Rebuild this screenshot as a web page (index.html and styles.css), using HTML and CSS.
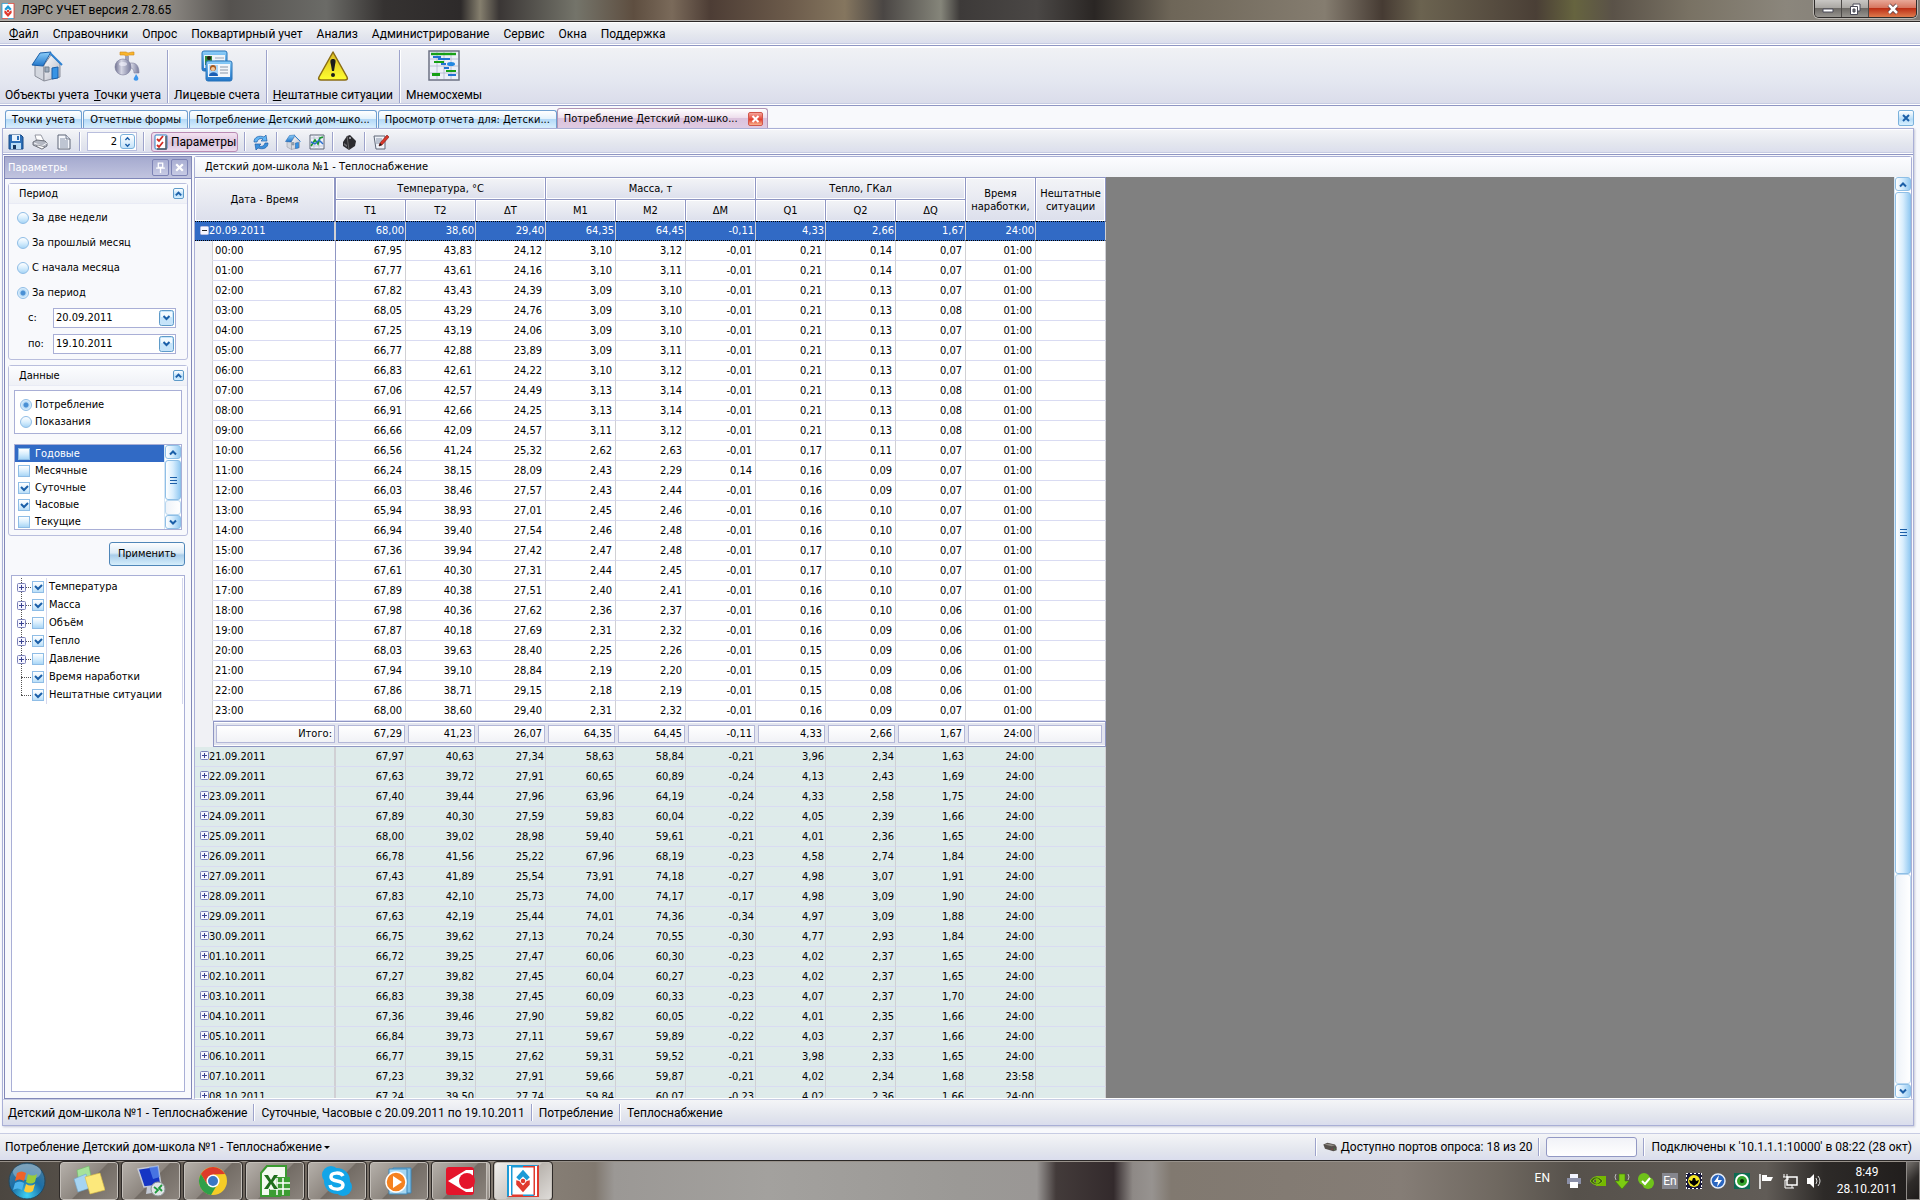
FILE: index.html
```html
<!DOCTYPE html>
<html lang="ru">
	<head>
		<meta charset="utf-8" />
		<title>ЛЭРС УЧЕТ версия 2.78.65</title>
		<link rel="stylesheet" href="styles.css">
	</head>
	<body>
		<svg class="defs" width="0" height="0">
			<defs>
				<linearGradient id="gBlue" x1="0" y1="0" x2="0" y2="1"><stop offset="0" stop-color="#8fd0fa"/><stop offset="1" stop-color="#1f74c9"/></linearGradient>
				<linearGradient id="gGrey" x1="0" y1="0" x2="1" y2="1"><stop offset="0" stop-color="#fdfdff"/><stop offset="1" stop-color="#b4b8c4"/></linearGradient>
				<linearGradient id="gMetal" x1="0" y1="0" x2="1" y2="0"><stop offset="0" stop-color="#6f7191"/><stop offset=".4" stop-color="#d5d6e4"/><stop offset="1" stop-color="#777a9b"/></linearGradient>
				<linearGradient id="gWarn" x1="0" y1="0" x2="0" y2="1"><stop offset="0" stop-color="#d9b824"/><stop offset="1" stop-color="#ffff2e"/></linearGradient>
				<radialGradient id="gOrb" cx=".5" cy=".9" r=".9"><stop offset="0" stop-color="#3fd3f5"/><stop offset=".5" stop-color="#1b6ea6"/><stop offset="1" stop-color="#4b7c9c"/></radialGradient>
			</defs>
			<symbol id="logo" viewBox="0 0 32 40">
				<path d="M1 1h30v38H1z" fill="#fff"/>
				<path d="M1 39V1h15M16 39h15" fill="none" stroke="#1c9ad6" stroke-width="2"/>
				<path d="M16 1h15v38M1 39h15" fill="none" stroke="#e03a2e" stroke-width="2"/>
				<path d="M16 5l9 10-4 4-5-5-5 5-4-4z" fill="#1c9ad6"/>
				<path d="M7 19l4 1 5 6 5-6 4-1v6l-9 10-9-10z" fill="#e03a2e"/>
				<circle cx="16" cy="20" r="3" fill="#e03a2e"/>
			</symbol>
			<symbol id="house" viewBox="0 0 32 32">
				<path d="M4 15l9-1v17l-9-5z" fill="#d3d7df" stroke="#8b8f9b"/>
				<path d="M13 15l7-10 9 9v13l-16 4z" fill="url(#gGrey)" stroke="#8b8f9b"/>
				<path d="M1 15L9 3l11-1-8 14z" fill="url(#gBlue)" stroke="#1b5fa8"/>
				<path d="M19 3l12 12" stroke="#2f82d2" stroke-width="2"/>
				<path d="M21 18l6-1v11l-6 1z" fill="#3793e4" stroke="#1b5fa8"/>
				<path d="M14 17h4v5h-4z" fill="#9dabbd" stroke="#72808f"/>
			</symbol>
			<symbol id="tap" viewBox="0 0 32 32">
				<path d="M8 2h6l2 1 4-1h2v3h-5l-2 1-3-1H8z" fill="#f9b52c" stroke="#cf861c" stroke-width=".6"/>
				<path d="M13 6h4v5h-4z" fill="#9fa1b8"/>
				<path d="M14 13h6c5 0 7 4 7 10h-5c0-3-1-5-4-5z" fill="url(#gMetal)" stroke="#7c7e9b" stroke-width=".6"/>
				<circle cx="11" cy="17" r="8" fill="url(#gMetal)" stroke="#7c7e9b" stroke-width=".6"/>
				<ellipse cx="11" cy="14" rx="4" ry="2" fill="#eeeefa" opacity=".7"/>
				<path d="M24 24c2 3 3 4 2 6-1 1-3 1-4 0-1-2 1-3 2-6z" fill="#3f97ec"/>
			</symbol>
			<symbol id="cards" viewBox="0 0 32 32">
				<rect x="1" y="1" width="25" height="20" rx="2" fill="url(#gBlue)" stroke="#2772b7"/>
				<path d="M3 5h21v13H3z" fill="#eef3f8"/>
				<path d="M4 6h7v9H4z" fill="#2f8a3e"/><circle cx="8" cy="8" r="2" fill="#2a1b10"/>
				<path d="M14 8h9M14 11h9" stroke="#9aa7b8"/>
				<rect x="5" y="11" width="26" height="20" rx="2" fill="url(#gBlue)" stroke="#2772b7"/>
				<path d="M7 14h22v13H7z" fill="#f4f6fa"/>
				<path d="M8 15h9v11H8z" fill="#a9d4f7"/>
				<circle cx="12" cy="18" r="3" fill="#a8571c"/><circle cx="12" cy="19" r="2" fill="#f5c89a"/><path d="M8 26c0-5 9-5 9 0z" fill="#1c5fb4"/>
				<path d="M19 17h8M19 20h8M19 23h8" stroke="#8a97a8"/>
			</symbol>
			<symbol id="warn" viewBox="0 0 32 32">
				<path d="M16 2L30 27c1 2 0 3-2 3H4c-2 0-3-1-2-3z" fill="url(#gWarn)" stroke="#8a6c14" stroke-width="1.5" stroke-linejoin="round"/>
				<path d="M16 9c3 0 3 2 2 6l-1 6h-2l-1-6c-1-4-1-6 2-6z" fill="#1c1c1c"/><circle cx="16" cy="25" r="2" fill="#1c1c1c"/>
			</symbol>
			<symbol id="gantt" viewBox="0 0 32 32">
				<path d="M1 1h30v29H1z" fill="#eceff8" stroke="#6c7183" stroke-width="1.5"/>
				<path d="M2 9h28M2 16h28M2 23h28M9 2v27M16 2v27M23 2v27" stroke="#b3b8cf" stroke-width=".8"/>
				<path d="M3 4h25" stroke="#16a016" stroke-width="2.4"/>
				<path d="M5 7h8M10 9h12M13 14h5M16 18h5M20 25h8" stroke="#2272d2" stroke-width="2"/>
				<path d="M6 12h10M18 21h10" stroke="#16a016" stroke-width="2"/>
				<path d="M4 23h8v3H4z" fill="#16a016"/><ellipse cx="23" cy="14" rx="4" ry="2" fill="#2287e2"/>
			</symbol>
			<symbol id="save" viewBox="0 0 16 16">
				<path d="M1 1h12l2 2v12H1z" fill="#2d6fb7" stroke="#194a86"/>
				<path d="M4 1h8v6H4z" fill="#e9f3fc"/><path d="M9 2h2v4H9z" fill="#2d6fb7"/>
				<path d="M3 9h10v6H3z" fill="#b9dcf6"/><path d="M5 11h3v4H5z" fill="#17365c"/>
			</symbol>
			<symbol id="print" viewBox="0 0 16 16">
				<path d="M3 1l6-0 3 6-7 1z" fill="#fff" stroke="#7d818d" stroke-width=".8"/>
				<path d="M1 8l4-2 8 1 2 2v3l-5 3-9-4z" fill="#b4b8c3" stroke="#555964" stroke-width=".8"/>
				<path d="M2 9l8 3 5-3" fill="none" stroke="#f3f4f8"/>
				<path d="M4 12l6 3 3-2-7-2z" fill="#fff" stroke="#555964" stroke-width=".6"/>
			</symbol>
			<symbol id="doc" viewBox="0 0 16 16">
				<path d="M2 1h8l4 4v10H2z" fill="#f5f7fc" stroke="#5e6676"/>
				<path d="M4 5h5M4 7h8M4 9h8M4 11h8M4 13h8" stroke="#8793a8"/><path d="M10 1v4h4" fill="#d6dce8" stroke="#5e6676" stroke-width=".8"/>
			</symbol>
			<symbol id="checks" viewBox="0 0 16 16">
				<rect x="2" y="1" width="12" height="14" rx="1" fill="#fff" stroke="#2f80c3"/>
				<path d="M13 2v13H4" fill="none" stroke="#4b565f" stroke-width="1.5"/>
				<path d="M4 5l2 2 4-5M4 11l2 2 4-5" fill="none" stroke="#d22b22" stroke-width="1.8"/>
			</symbol>
			<symbol id="refresh" viewBox="0 0 16 16">
				<path d="M1 8C1 3 6 1 11 3l2-2 1 6H8l2-2C7 4 5 5 4 8z" fill="#62b5f3" stroke="#1c5da8" stroke-width=".7"/>
				<path d="M15 9c0 5-5 7-10 5l-2 2-1-6h6l-2 2c3 1 5 0 6-3z" fill="#3b8fdb" stroke="#1c5da8" stroke-width=".7"/>
			</symbol>
			<symbol id="chart" viewBox="0 0 16 16">
				<path d="M1 1h14v14H1z" fill="#eef2f9" stroke="#5e6676"/><path d="M1 4h14M1 8h14M1 12h14M5 1v14M10 1v14" stroke="#b5bccd" stroke-width=".7"/>
				<path d="M2 12l4-6 3 4 2-6 3-1" fill="none" stroke="#18962d" stroke-width="1.6"/><path d="M2 8l4 2 4-4 4 4" fill="none" stroke="#2b6fd0" stroke-width="1.4"/>
			</symbol>
			<symbol id="box" viewBox="0 0 16 16">
				<path d="M2 8l4-6 3-1 6 6-1 5-6 4-6-4z" fill="#2b2b2f"/><path d="M6 2l1 7 1 7" stroke="#777" stroke-width=".8" fill="none"/><path d="M3 9l3 2v2l-3-2z" fill="#6c6c72"/><circle cx="9" cy="4" r="1" fill="#b7b7bd"/>
			</symbol>
			<symbol id="edit" viewBox="0 0 16 16">
				<path d="M1 2h11v13H3z" fill="#eef2f9" stroke="#5e6676"/><path d="M3 5h6M3 7h6M3 9h4" stroke="#8793a8"/>
				<path d="M6 12l1-3 7-8 2 2-7 8z" fill="#d9372a" stroke="#7b1712" stroke-width=".6"/><path d="M6 12l1-3 2 2z" fill="#1b1b1b"/>
			</symbol>
			<symbol id="modem" viewBox="0 0 16 12">
				<path d="M0 3l5-2 9 2 2 3v4l-4 1L2 8z" fill="#55504c"/><path d="M1 3l5-1 8 2-4 1z" fill="#8f8a84"/><path d="M10 8h1v1h-1z" fill="#e33"/><path d="M13 8h1v1h-1z" fill="#3c3"/>
			</symbol>
			<symbol id="x" viewBox="0 0 10 10"><path d="M2 2l6 6M8 2L2 8" stroke="currentColor" stroke-width="2" fill="none"/></symbol>
			<symbol id="pin" viewBox="0 0 10 10"><path d="M3 1h4v4H3zM1 5.5h8M5 6v4" stroke="currentColor" stroke-width="1.2" fill="none"/></symbol>
			<symbol id="up" viewBox="0 0 10 10"><path d="M2 7l3-3 3 3" stroke="currentColor" stroke-width="2" fill="none"/></symbol>
			<symbol id="down" viewBox="0 0 10 10"><path d="M2 3l3 3 3-3" stroke="currentColor" stroke-width="2" fill="none"/></symbol>
			<symbol id="plus" viewBox="0 0 9 9"><rect x=".5" y=".5" width="8" height="8" rx="1" fill="#f6f6ff" stroke="#7c82b8"/><path d="M2 4.500h5M4.500 2v5" stroke="#3a4390"/></symbol>
			<symbol id="minus" viewBox="0 0 9 9"><rect x=".5" y=".5" width="8" height="8" rx="1" fill="#f6f6ff" stroke="#b9bde0"/><path d="M2 4.500h5" stroke="#222"/></symbol>
		</svg>

		<header class="titlebar">
			<svg class="titleIcon"><use href="#logo"/></svg>
			<h1>ЛЭРС УЧЕТ версия 2.78.65</h1>
			<div class="winButtons">
				<button aria-label="Свернуть"><svg viewBox="0 0 12 12"><path d="M1 6h10v3H1z" fill="#fff" stroke="#4a4a58"/></svg></button>
				<button aria-label="Восстановить"><svg viewBox="0 0 12 12"><path d="M4 1h7v7H4z" fill="#fff" stroke="#4a4a58"/><path d="M1.500 3.500h7v8h-7z" fill="#fff" stroke="#4a4a58"/><path d="M4 6h2v3H4z" fill="#777" stroke="#4a4a58"/></svg></button>
				<button class="winClose" aria-label="Закрыть"><svg viewBox="0 0 12 12"><path d="M2 2l8 8M10 2l-8 8" stroke="#5b3c40" stroke-width="4"/><path d="M2 2l8 8M10 2l-8 8" stroke="#fff" stroke-width="2.500"/></svg></button>
			</div>
		</header>

		<nav class="menu">
			<a href="#"><u>Ф</u>айл</a>
			<a href="#">Справочники</a>
			<a href="#">Опрос</a>
			<a href="#">Поквартирный учет</a>
			<a href="#">Анализ</a>
			<a href="#">Администрирование</a>
			<a href="#">Сервис</a>
			<a href="#">Окна</a>
			<a href="#">Поддержка</a>
		</nav>

		<div class="toolbar">
			<button><svg><use href="#house"/></svg>Объекты учета</button>
			<button><svg><use href="#tap"/></svg><span><u>Т</u>очки учета</span></button>
			<i class="sep"></i>
			<button><svg><use href="#cards"/></svg>Лицевые счета</button>
			<i class="sep"></i>
			<button><svg><use href="#warn"/></svg><span><u>Н</u>ештатные ситуации</span></button>
			<i class="sep"></i>
			<button><svg><use href="#gantt"/></svg>Мнемосхемы</button>
		</div>

		<div class="tabs">
			<button class="tab">Точки учета</button>
			<button class="tab">Отчетные формы</button>
			<button class="tab">Потребление Детский дом-шко...</button>
			<button class="tab">Просмотр отчета для: Детски...</button>
			<div class="tab tabActive">
				<span>Потребление Детский дом-шко...</span>
				<button class="tabClose" aria-label="Закрыть вкладку"><svg><use href="#x"/></svg></button>
			</div>
			<button class="smallButton tabsClose" aria-label="Закрыть"><svg><use href="#x"/></svg></button>
		</div>

		<main class="document">
			<div class="tools">
				<button aria-label="Сохранить"><svg><use href="#save"/></svg></button>
				<button aria-label="Печать"><svg><use href="#print"/></svg></button>
				<button aria-label="Документ"><svg><use href="#doc"/></svg></button>
				<i class="sep"></i>
				<div class="spin">
					<input type="text" value="2" aria-label="Точность" />
					<span class="spinButtons"><svg><use href="#up"/></svg><svg><use href="#down"/></svg></span>
				</div>
				<i class="sep"></i>
				<button class="pressed"><svg><use href="#checks"/></svg>Параметры</button>
				<i class="sep"></i>
				<button aria-label="Обновить"><svg><use href="#refresh"/></svg></button>
				<i class="sep"></i>
				<button aria-label="Объект"><svg><use href="#house"/></svg></button>
				<button aria-label="График"><svg><use href="#chart"/></svg></button>
				<i class="sep"></i>
				<button aria-label="Прибор"><svg><use href="#box"/></svg></button>
				<i class="sep"></i>
				<button aria-label="Правка"><svg><use href="#edit"/></svg></button>
			</div>

			<div class="work">
				<aside class="panel">
					<div class="panelHead">
						<h2>Параметры</h2>
						<button aria-label="Закрепить"><svg><use href="#pin"/></svg></button>
						<button aria-label="Закрыть панель"><svg><use href="#x"/></svg></button>
					</div>
					<section class="group">
						<div class="groupHead"><h3>Период</h3><button class="smallButton" aria-label="Свернуть период"><svg><use href="#up"/></svg></button></div>
						<div class="period">
							<label><input type="radio" name="period" />За две недели</label>
							<label><input type="radio" name="period" />За прошлый месяц</label>
							<label><input type="radio" name="period" />С начала месяца</label>
							<label><input type="radio" name="period" checked />За период</label>
							<div class="dateRow"><label for="dateFrom">с:</label><select id="dateFrom"><option>20.09.2011</option></select></div>
							<div class="dateRow"><label for="dateTo">по:</label><select id="dateTo"><option>19.10.2011</option></select></div>
						</div>
					</section>
					<section class="group">
						<div class="groupHead"><h3>Данные</h3><button class="smallButton" aria-label="Свернуть данные"><svg><use href="#up"/></svg></button></div>
						<div class="kind">
							<label><input type="radio" name="kind" checked />Потребление</label>
							<label><input type="radio" name="kind" />Показания</label>
						</div>
						<div class="list">
							<div class="listItems">
								<label class="selected"><input type="checkbox" />Годовые</label>
								<label><input type="checkbox" />Месячные</label>
								<label><input type="checkbox" checked />Суточные</label>
								<label><input type="checkbox" checked />Часовые</label>
								<label><input type="checkbox" />Текущие</label>
							</div>
							<div class="scroll"><button aria-label="Вверх"><svg><use href="#up"/></svg></button><i class="thumb thumbList"></i><i class="track"></i><button aria-label="Вниз"><svg><use href="#down"/></svg></button></div>
						</div>
					</section>
					<button class="apply">Применить</button>
					<div class="tree">
						<label><svg><use href="#plus"/></svg><input type="checkbox" checked /><span>Температура</span></label>
						<label><svg><use href="#plus"/></svg><input type="checkbox" checked /><span>Масса</span></label>
						<label><svg><use href="#plus"/></svg><input type="checkbox" /><span>Объём</span></label>
						<label><svg><use href="#plus"/></svg><input type="checkbox" checked /><span>Тепло</span></label>
						<label><svg><use href="#plus"/></svg><input type="checkbox" /><span>Давление</span></label>
						<label class="leaf"><svg></svg><input type="checkbox" checked /><span>Время наработки</span></label>
						<label class="leaf last"><svg></svg><input type="checkbox" checked /><span>Нештатные ситуации</span></label>
					</div>
				</aside>

				<section class="report">
					<h2>Детский дом-школа №1 - Теплоснабжение</h2>
					<div class="gridArea">
						<div class="gridView">
							<table>
								<colgroup><col class="colGutter"><col class="colDate"><col span="11"></colgroup>
								<thead>
									<tr>
										<th colspan="2" rowspan="2" class="dateHead">Дата - Время</th>
										<th colspan="3">Температура, °С</th>
										<th colspan="3">Масса, т</th>
										<th colspan="3">Тепло, ГКал</th>
										<th rowspan="2">Время наработки,</th>
										<th rowspan="2">Нештатные ситуации</th>
									</tr>
									<tr><th>T1</th><th>T2</th><th>ΔT</th><th>M1</th><th>M2</th><th>ΔM</th><th>Q1</th><th>Q2</th><th>ΔQ</th></tr>
								</thead>
								<tbody id="rows"></tbody>
							</table>
						</div>
						<div class="scroll"><button aria-label="Вверх"><svg><use href="#up"/></svg></button><i class="thumb thumbGrid"></i><i class="track"></i><button aria-label="Вниз"><svg><use href="#down"/></svg></button></div>
					</div>
				</section>
			</div>

			<div class="status">
				<span>Детский дом-школа №1 - Теплоснабжение</span><i class="sep"></i>
				<span>Суточные, Часовые с 20.09.2011 по 19.10.2011</span><i class="sep"></i>
				<span>Потребление</span><i class="sep"></i>
				<span>Теплоснабжение</span>
			</div>
		</main>

		<footer class="appStatus">
			<button>Потребление Детский дом-школа №1 - Теплоснабжение<i class="caret"></i></button>
			<i class="sep pushRight"></i>
			<svg class="modem"><use href="#modem"/></svg>
			<span>Доступно портов опроса: 18 из 20</span>
			<i class="sep"></i>
			<div class="progress"></div>
			<i class="sep"></i>
			<span>Подключены к '10.1.1.1:10000' в 08:22 (28 окт)</span>
		</footer>

		<div class="taskbar">
			<button class="start" aria-label="Пуск">
				<svg viewBox="0 0 38 38"><circle cx="19" cy="19" r="18" fill="url(#gOrb)" stroke="#23485f"/><ellipse cx="19" cy="10" rx="14" ry="8" fill="#fff" opacity=".3"/>
				<path d="M9 11c3-2 6-2 9 0l-2 8c-3-2-6-2-9 0z" fill="#f0622a"/><path d="M20 12c3 2 6 2 9 0l-2 8c-3 2-6 2-9 0z" fill="#9acb3c"/><path d="M7 21c3-2 6-2 9 0l-2 7c-3-2-6-2-9 0z" fill="#4cb4ee"/><path d="M18 22c3 2 6 2 9 0l-2 7c-3 2-6 2-9 0z" fill="#fccb3a"/></svg>
			</button>
			<button class="app" aria-label="Заметки"><svg viewBox="0 0 32 32"><path d="M4 5l12-4 3 16-13 3z" fill="#a6e29a" stroke="#6fb767" stroke-width=".6"/><path d="M1 14l12-5 4 14-12 4z" fill="#a6d4f2" stroke="#6ea6cf" stroke-width=".6"/><path d="M12 12l15-4 5 17-15 4z" fill="#fce87b" stroke="#d8b943" stroke-width=".6"/></svg></button>
			<button class="app" aria-label="Удаленный рабочий стол"><svg viewBox="0 0 32 32"><path d="M3 4l20-3 3 19-17 2z" fill="#1535c4" stroke="#c4cad6" stroke-width="1.500"/><path d="M14 2l9-1 2 11-7 2z" fill="#5c8ff0" opacity=".7"/><path d="M12 22l8-1 3 6-12 2z" fill="#c4cad6"/><circle cx="23" cy="24" r="7" fill="#dfe4e6" stroke="#8b9294"/><path d="M19 22l4 3-3 3M27 20l-3 3 3 3" fill="none" stroke="#1f9a3c" stroke-width="1.800"/></svg></button>
			<button class="app" aria-label="Браузер"><svg viewBox="0 0 32 32"><circle cx="16" cy="16" r="14" fill="#f5cc27"/><path d="M3.900 9A14 14 0 0 1 28.100 9L16 9.500 10 19z" fill="#dd3b2a"/><path d="M3.900 9A14 14 0 0 0 14 30l6-10-10-1z" fill="#2fa04a"/><circle cx="16" cy="16" r="6.500" fill="#fff"/><circle cx="16" cy="16" r="5" fill="#3b77c4"/></svg></button>
			<button class="app" aria-label="Таблицы"><svg viewBox="0 0 32 32"><path d="M2 8l6-7h19v25l-6 5H2z" fill="#f4faf0" stroke="#3a9a30" stroke-width="2"/><path d="M17 12h14v19H10v-7h7z" fill="#3c9d33"/><path d="M18 18h13M11 24h20M18 13v17M24 13v17" stroke="#fff" stroke-width="1.500"/><path d="M5 10h4l3 5 3-5h4l-5 7 5 7h-4l-3-5-3 5H5l5-7z" fill="#1f6e1c"/></svg></button>
			<button class="app" aria-label="Скайп"><svg viewBox="0 0 32 32"><circle cx="10" cy="10" r="9" fill="#12a5e8"/><circle cx="22" cy="22" r="9" fill="#12a5e8"/><circle cx="16" cy="16" r="13" fill="#12a5e8"/><path d="M22 11c-2-4-12-4-12 1 0 6 12 2 12 8 0 6-12 5-13 0" fill="none" stroke="#fff" stroke-width="3.500"/></svg></button>
			<button class="app" aria-label="Плеер"><svg viewBox="0 0 32 32"><path d="M10 3h18v25H10z" fill="#7ebfe6" stroke="#3e87b8"/><path d="M6 4h18v25H6z" fill="#a6d7f2" stroke="#3e87b8"/><circle cx="13" cy="17" r="10" fill="#f58220" stroke="#fff" stroke-width="1.500"/><path d="M10 11l9 6-9 6z" fill="#fff"/></svg></button>
			<button class="app stacked" aria-label="Камера"><svg viewBox="0 0 32 32"><rect x="2" y="2" width="28" height="28" rx="3" fill="#e4152b"/><path d="M4 16L22 5h7v22h-7z" fill="#fff"/><circle cx="23" cy="16" r="8" fill="#e4152b"/></svg></button>
			<button class="app appActive" aria-label="ЛЭРС УЧЕТ"><svg class="appLogo"><use href="#logo"/></svg></button>
			<div class="tray">
				<span class="lang">EN</span>
				<svg viewBox="0 0 16 16"><path d="M4 1h8v5H4z" fill="#f2f4ff"/><path d="M1 5h14v6H1z" fill="#8b90a8"/><path d="M4 9h8v6H4z" fill="#fff"/></svg>
				<svg viewBox="0 0 16 16"><path d="M6 3h10v10H6z" fill="#76b900"/><path d="M0 8c4-6 9-5 13 0-4 5-9 5-13 0zm3 0c3 3 5 3 7 0-2-3-4-3-7 0z" fill="#3f6d08" stroke="#8fd11c" stroke-width=".8"/></svg>
				<svg viewBox="0 0 16 16"><path d="M5 1h6v7h4l-7 8-7-8h4z" fill="#7ccc12" stroke="#3f7d06" stroke-width=".6"/><path d="M2 1Q0 4 2 7M14 1q2 3 0 6" stroke="#bbb" fill="none"/></svg>
				<svg viewBox="0 0 16 16"><circle cx="6" cy="6" r="6" fill="#6fc21a"/><circle cx="10" cy="10" r="6" fill="#6fc21a"/><path d="M4 8l3 3 5-6" fill="none" stroke="#fff" stroke-width="2"/></svg>
				<span class="trayEn">En</span>
				<svg viewBox="0 0 16 16"><path d="M0 0h16v16H0z" fill="#16163a" stroke="#fff" stroke-width="2" stroke-dasharray="2 2"/><circle cx="8" cy="8" r="6" fill="#f7ea25"/><path d="M3 7l3 1 1-3h2l1 3 3-1-1 3-4 3-4-3z" fill="#000"/></svg>
				<svg viewBox="0 0 16 16"><circle cx="8" cy="8" r="7" fill="#2a66c0" stroke="#e6eefa" stroke-width="1.500"/><path d="M9 2L4 9h4l-1 5 5-7H8z" fill="#fff"/></svg>
				<svg viewBox="0 0 16 16"><path d="M0 0h16v16H0z" fill="#0d6b52"/><circle cx="8" cy="8" r="7" fill="#fff"/><circle cx="8" cy="8" r="5" fill="#36a42c"/><circle cx="8" cy="8" r="2" fill="#082b08"/></svg>
				<svg viewBox="0 0 16 16"><path d="M2 1v15" stroke="#fff" stroke-width="1.500"/><path d="M4 2h5v6H4zM9 4h6l-2 4H9z" fill="#fff"/></svg>
				<svg viewBox="0 0 16 16"><path d="M5 4h10v8H5z" fill="none" stroke="#fff" stroke-width="1.500"/><path d="M2 1v3M5 1v3M1 4h5v3H3v8h9M10 12v3" fill="none" stroke="#fff"/></svg>
				<svg viewBox="0 0 16 16"><path d="M1 5h3l4-4v14l-4-4H1z" fill="#fff"/><path d="M10 5q2 3 0 6M12 3q4 5 0 10" fill="none" stroke="#ddd"/></svg>
				<time class="clock"><span>8:49</span><span>28.10.2011</span></time>
				<button class="showDesktop" aria-label="Свернуть все окна"></button>
			</div>
		</div>
		<script src="script.js"></script>
	</body>
</html>
```

FILE: styles.css
```css
* {
	box-sizing: border-box;
}
body {
	margin: 0;
	height: 100vh;
	display: flex;
	flex-direction: column;
	overflow: hidden;
	background: #f8f9fc;
	color: #000;
	font: 11px/14px "DejaVu Sans Condensed", "DejaVu Sans", sans-serif;
}
h1, h2, h3 {
	margin: 0;
	font-size: inherit;
	font-weight: normal;
}
button {
	font: inherit;
	color: inherit;
	margin: 0;
	padding: 0;
	border: 0;
	background: none;
}
svg {
	display: block;
	flex: none;
}
.defs {
	position: absolute;
}
a {
	color: inherit;
	text-decoration: none;
}
.sep {
	flex: none;
	width: 2px;
	align-self: stretch;
	border-left: 1px solid #9da3cb;
	border-right: 1px solid #fff;
}

/* window title */
.titlebar {
	flex: none;
	height: 22px;
	display: flex;
	align-items: flex-start;
	gap: 5px;
	border-bottom: 1px solid #2b2727;
	box-shadow: inset 0 -1px #b3afab;
	font: 12px/21px Roboto, sans-serif;
	background: linear-gradient(90deg, #a09c96 0, #99958f 8%, #55524f 12%, #6b6b67 17%, #353231 20%, #2d2a2a 24%, #857f6e 25%, #3a3635 26%, #74746a 30%, #5e4e40 33%, #7a6a5a 35%, #4d3d35 37%, #6b5a4a 41%, #85765f 44%, #4a4644 46%, #85857a 49%, #3d3a39 50%, #4a4745 54%, #2a2624 57%, #6e6658 61%, #857d70 69%, #463b33 72%, #6b6350 74%, #4a3f36 80%, #66643f 82%, #5a5248 84%, #797264 88%, #8b867c 93%, #7f7b76 100%);
}
.titleIcon {
	width: 16px;
	height: 16px;
	margin-top: 3px;
}
.titlebar h1 {
	flex: 1;
}
.winButtons {
	display: flex;
	height: 18px;
	margin-right: 3px;
	border: 1px solid #2e2b2a;
	border-top: 0;
	border-radius: 0 0 5px 5px;
	overflow: hidden;
	box-shadow: 0 0 0 1px #bbb7b2;
}
.winButtons button {
	width: 27px;
	display: flex;
	justify-content: center;
	align-items: center;
	border-right: 1px solid #4d4a48;
	background: linear-gradient(#c9c7c4, #a7a4a0 50%, #6d6a66 50%, #97948f);
}
.winButtons svg {
	width: 12px;
	height: 12px;
}
.winButtons .winClose {
	width: 47px;
	border-right: 0;
	background: linear-gradient(#e8a898, #d5705a 50%, #bd2f16 50%, #de7a4c);
}

/* main menu and big buttons */
.menu, .toolbar, .status, .appStatus {
	font: 12px/16px Roboto, sans-serif;
}
.menu {
	flex: none;
	height: 24px;
	display: flex;
	align-items: center;
	gap: 14px;
	padding: 0 9px;
	border-bottom: 1px solid #8f96c3;
	background: linear-gradient(#f4f5f7, #e3e6ee 60%, #dadded);
	box-shadow: inset 0 1px #fff, inset 0 -1px #fff, inset 0 -2px #c7cce3;
}
.toolbar {
	flex: none;
	height: 60px;
	display: flex;
	padding: 4px 3px 2px;
	border-bottom: 1px solid #8f96c3;
	background: linear-gradient(#f1f2f5, #e5e8f1 55%, #dadcea);
	box-shadow: inset 0 2px #fff, inset 0 -1px #fff, inset 0 -2px #c7cce3;
}
.toolbar button {
	display: flex;
	flex-direction: column;
	align-items: center;
	justify-content: space-between;
	padding: 0 3px 0 2px;
}
.toolbar svg {
	width: 32px;
	height: 32px;
}
.toolbar .sep {
	margin: 0 3px;
}

/* document tabs */
.tabs {
	flex: none;
	height: 22px;
	display: flex;
	align-items: flex-end;
	gap: 1px;
	padding: 0 6px 0 5px;
	background: #f8f9fc;
}
.tab {
	height: 18px;
	padding: 0 6px;
	border: 1px solid #6f9fd0;
	border-bottom: 0;
	border-radius: 3px 3px 0 0;
	background: linear-gradient(#fff, #e4f2fc 45%, #b4d9f7 50%, #d9effd);
	white-space: nowrap;
}
.tabActive {
	height: 20px;
	display: flex;
	align-items: center;
	gap: 10px;
	margin-left: -1px;
	padding-right: 4px;
	border-color: #b295b5;
	background: linear-gradient(#fff, #eedfed 45%, #dbc2dc 50%, #dfcbe2);
}
.tabClose {
	width: 15px;
	height: 14px;
	padding: 1px;
	border: 1px solid #d2564b;
	border-radius: 2px;
	color: #fff;
	background: linear-gradient(#f5a49a, #e2402f 55%, #f9b48f);
}
.tabClose svg {
	width: 11px;
	height: 10px;
}
.smallButton {
	flex: none;
	width: 16px;
	height: 16px;
	padding: 2px;
	border: 1px solid #7bb2dc;
	border-radius: 2px;
	color: #1b5fa8;
	background: linear-gradient(#fff, #b5dcf8 60%, #d8f0ff);
}
.smallButton svg {
	width: 10px;
	height: 10px;
}
.tabsClose {
	margin-left: auto;
	margin-bottom: 2px;
	align-self: flex-end;
}

/* document frame */
.document {
	flex: 1;
	min-height: 0;
	display: flex;
	flex-direction: column;
	margin: 0 6px 7px 2px;
	border: 1px solid #a9afd6;
	box-shadow: 1px 1px 2px #c5c8d8;
}
.tools {
	flex: none;
	height: 26px;
	display: flex;
	align-items: center;
	gap: 6px;
	padding: 0 4px;
	border-bottom: 1px solid #8f96c3;
	background: linear-gradient(#f4f5f8, #e3e6ee 60%, #dadded);
	box-shadow: inset 0 1px #fff, inset 0 -1px #fff, inset 0 -2px #c7cce3;
}
.tools svg {
	width: 16px;
	height: 16px;
}
.tools > button {
	display: flex;
	align-items: center;
	gap: 2px;
	padding: 0 1px;
}
.tools .sep {
	margin: 3px 0;
}
.tools .pressed {
	height: 20px;
	border: 1px solid #b98bb3;
	border-radius: 3px;
	background: linear-gradient(#f3e3f1, #dcc4dd 55%, #ecdcee);
	font: 12px/16px Roboto, sans-serif;
}
.spin {
	width: 50px;
	height: 19px;
	display: flex;
	border: 1px solid #b9bedd;
	background: #fff;
}
.spin input {
	width: 31px;
	border: 0;
	padding: 0 2px;
	background: none;
	font: inherit;
	text-align: right;
}
.spinButtons {
	width: 15px;
	margin: 1px;
	border: 1px solid #7bb2dc;
	border-radius: 3px;
	color: #1b5fa8;
	background: linear-gradient(#fff, #c4e3fa);
}
.spinButtons svg {
	width: 13px;
	height: 7px;
}
.work {
	flex: 1;
	min-height: 0;
	display: flex;
	gap: 2px;
	padding: 1px 1px 0;
}

/* left panel */
.panel {
	flex: none;
	width: 188px;
	display: flex;
	flex-direction: column;
	border: 1px solid #8288b8;
	background: #f8f9fc;
}
.panelHead {
	flex: none;
	height: 22px;
	display: flex;
	align-items: center;
	gap: 2px;
	padding: 0 3px;
	border-bottom: 1px solid #7f86b8;
	color: #fff;
	background: linear-gradient(#a5aacf, #c1c4df);
}
.panelHead h2 {
	flex: 1;
}
.panelHead button {
	width: 17px;
	height: 17px;
	padding: 2px;
	border: 1px solid #7d83b5;
	border-radius: 2px;
	background: linear-gradient(#a9aed2, #c7cae4);
}
.panelHead svg {
	width: 11px;
	height: 11px;
}
.group {
	flex: none;
	margin: 4px 3px 1px;
	padding: 0 5px 5px;
	border: 1px solid #b9bedd;
	border-radius: 3px;
}
.groupHead {
	height: 20px;
	display: flex;
	align-items: center;
	justify-content: space-between;
	margin: 0 -5px;
	padding: 0 3px 0 10px;
	border-bottom: 1px solid #e9ebf5;
	background: linear-gradient(#fcfdff, #eff1f6);
}
.groupHead .smallButton {
	width: 11px;
	height: 11px;
	padding: 0;
	border-color: #5f9bc9;
}
.groupHead svg {
	width: 9px;
	height: 9px;
}
input[type=radio], input[type=checkbox] {
	appearance: none;
	flex: none;
	width: 12px;
	height: 12px;
	margin: 0;
	border: 1px solid #8fbde6;
	background: linear-gradient(#fff, #d8eefd 50%, #a9d6f6);
}
input[type=radio] {
	border-radius: 50%;
}
input[type=radio]:checked {
	background: radial-gradient(circle at 50% 50%, #4a90d4 0, #4a90d4 2px, #b5d9f6 3px, #e2f3fe 5px);
}
input[type=checkbox]:checked {
	background: url("data:image/svg+xml,%3Csvg xmlns='http://www.w3.org/2000/svg' viewBox='0 0 10 10'%3E%3Cpath d='M2 4l3 3 4-4' fill='none' stroke='%231b5fa8' stroke-width='2'/%3E%3C/svg%3E"), linear-gradient(#fff, #e2f3fe 50%, #b9def8);
}
.period label, .kind label, .listItems label {
	display: flex;
	align-items: center;
	gap: 3px;
}
.period {
	padding: 1px 6px 0 3px;
}
.period > label {
	height: 25px;
}
.dateRow {
	display: flex;
	align-items: center;
	padding-left: 11px;
	height: 20px;
	margin-top: 3px;
}
.dateRow + .dateRow {
	margin-top: 6px;
}
.dateRow label {
	width: 28px;
}
.dateRow select {
	appearance: none;
	width: 123px;
	flex: none;
	height: 20px;
	padding: 0 2px;
	border: 1px solid #a9afd6;
	border-radius: 0;
	color: #000;
	font: inherit;
	background: url("data:image/svg+xml,%3Csvg xmlns='http://www.w3.org/2000/svg' viewBox='0 0 15 16'%3E%3Crect x='.5' y='.5' width='14' height='15' rx='2' fill='%23c6e4fa' stroke='%235f9bc9'/%3E%3Cpath d='M2 2h11v5H2z' fill='%23f2faff'/%3E%3Cpath d='M4.500 6l3 3 3-3' fill='none' stroke='%231b5fa8' stroke-width='2'/%3E%3C/svg%3E") right 1px center / 15px 16px no-repeat #fff;
}
.kind {
	margin-top: 4px;
	padding: 5px;
	height: 44px;
	border: 1px solid #a9afd6;
	background: #fff;
}
.kind label {
	height: 17px;
}
.list {
	height: 86px;
	display: flex;
	margin: 10px 0 0;
	border: 1px solid #a9afd6;
	background: #fff;
}
.listItems {
	flex: 1;
	overflow: hidden;
}
.listItems label {
	gap: 5px;
	height: 17px;
	padding-left: 3px;
}
.listItems .selected {
	color: #fff;
	background: #316ac5;
}
.apply {
	flex: none;
	align-self: flex-end;
	width: 76px;
	height: 24px;
	margin: 5px 6px 9px 0;
	border: 1px solid #4f86b8;
	border-radius: 3px;
	background: linear-gradient(#fdfdfe, #dcebf6 45%, #a9cdea 55%, #d6eefb);
}
.tree {
	flex: 1;
	min-height: 0;
	margin: 0 6px 6px 6px;
	padding: 2px 1px 2px 5px;
	border: 1px solid #a9afd6;
	background: #fff;
}
.tree label {
	height: 18px;
	display: flex;
	align-items: center;
	background: repeating-linear-gradient(#555 0, #555 1px, transparent 1px, transparent 2px) 4px 0 / 1px 18px no-repeat;
}
.tree label.last {
	background-size: 1px 9px;
}
.tree svg {
	width: 9px;
	height: 9px;
}
.tree .leaf svg {
	visibility: hidden;
}
.tree label::before {
	content: "";
	order: 1;
	width: 5px;
	border-top: 1px dotted #555;
	margin-right: 1px;
}
.tree .leaf::before {
	width: 10px;
	margin-left: -5px;
}
.tree input {
	order: 2;
}
.tree span {
	order: 3;
	flex: 1;
	margin-left: 2px;
	padding-left: 2px;
	line-height: 18px;
	border-left: 1px solid #d5d8ee;
	border-right: 1px solid #d5d8ee;
}

/* report grid */
.report {
	flex: 1;
	min-width: 0;
	display: flex;
	flex-direction: column;
	border: 1px solid #a9afd6;
	border-bottom-color: #fff;
	border-radius: 3px 3px 0 0;
}
.report h2 {
	flex: none;
	height: 20px;
	padding-left: 10px;
	line-height: 20px;
	background: linear-gradient(#fcfdff, #eff1f5);
}
.gridArea {
	flex: 1;
	min-height: 0;
	display: flex;
}
.gridView {
	flex: 1;
	min-width: 0;
	overflow: hidden;
	background: #808080;
}
table {
	width: 911px;
	table-layout: fixed;
	border-collapse: separate;
	border-spacing: 0;
	background: #fff;
}
.colGutter {
	width: 18px;
}
.colDate {
	width: 123px;
}
th {
	height: 22px;
	padding: 0 2px;
	border-top: 1px solid #8f96c3;
	border-right: 1px solid #8f96c3;
	font-weight: normal;
	line-height: 13px;
	background: linear-gradient(#f3f4f7, #dcdfec);
	box-shadow: inset 0 0 0 1px #fff;
}
th.dateHead {
	border-right-width: 2px;
}
td {
	height: 20px;
	padding: 0 3px 0 2px;
	border-right: 1px solid #d0d0d4;
	border-bottom: 1px solid #d9dbf2;
	line-height: 14px;
	text-align: right;
}
td.gutter {
	border-bottom-color: #f0f1f5;
	background: #f0f1f5;
}
.hour td.time {
	border-right-color: #8f96c3;
	text-align: left;
}
.day {
	background: #deebea;
}
.day td {
	padding-right: 1px;
}
.day td.date {
	padding-left: 5px;
	border-right: 2px solid #d0d0d4;
	text-align: left;
}
.date span {
	display: flex;
	align-items: center;
}
.date svg {
	width: 9px;
	height: 9px;
	margin-bottom: 2px;
}
.open {
	color: #fff;
	background: #316ac5;
}
.open td {
	border-top: 1px dotted #000;
	border-bottom: 1px dotted #000;
}
.total td {
	height: 26px;
	padding: 3px 1px 3px 2px;
	border-right: 0;
	border-top: 1px solid #8f96c3;
	border-bottom: 1px solid #8f96c3;
	background: #e2e4ef;
	box-shadow: inset 0 1px #fff, inset 0 -1px #fff;
}
.total td.gutter {
	border-color: #f0f1f5;
	background: #f0f1f5;
	box-shadow: none;
}
.total td:nth-child(2) {
	border-left: 1px solid #8f96c3;
}
.total td:last-child {
	padding-right: 3px;
	border-right: 1px solid #8f96c3;
}
.total span {
	display: block;
	height: 18px;
	padding-right: 2px;
	border: 1px solid #b4b8d8;
	line-height: 16px;
	background: linear-gradient(#fff, #f1f2f6);
}

/* scroll bars */
.scroll {
	flex: none;
	width: 17px;
	display: flex;
	flex-direction: column;
	border-left: 1px solid #d5e6f5;
	background: #fff;
}
.scroll button, .thumb {
	border: 1px solid #8fbfe6;
	border-radius: 3px;
	color: #1b5fa8;
	background: linear-gradient(90deg, #fff, #cfe9fc 50%, #94caf2);
}
.scroll button {
	height: 14px;
	padding: 0 2px;
}
.scroll svg {
	width: 10px;
	height: 11px;
}
.thumb {
	flex: none;
	margin-top: 1px;
	background:
		repeating-linear-gradient(#1b5fa8 0, #1b5fa8 1px, transparent 1px, transparent 3px) center / 7px 7px no-repeat,
		linear-gradient(90deg, #fff, #d7edfd 50%, #94caf2);
}
.thumbList {
	height: 40px;
}
.thumbGrid {
	height: 74%;
}
.track {
	flex: 1;
	border: 1px solid #b9d7ef;
	border-radius: 3px;
	background: linear-gradient(90deg, #eef3f9, #fff);
}

/* status lines */
.status, .appStatus {
	flex: none;
	display: flex;
	align-items: center;
	gap: 6px;
	background: linear-gradient(#f4f5f7, #e1e4ed 70%, #dadded);
}
.status {
	height: 26px;
	padding: 0 5px;
	border-top: 1px solid #c7cce3;
}
.status .sep, .appStatus .sep {
	margin: 4px 0;
}
.appStatus {
	height: 27px;
	padding: 0 8px 0 5px;
	border-top: 1px solid #c7cce3;
}
.appStatus button {
	display: flex;
	align-items: center;
	gap: 2px;
}
.caret {
	border: 3px solid transparent;
	border-top-color: #000;
	border-bottom: 0;
}
.appStatus .pushRight {
	margin-left: auto;
}
.modem {
	width: 14px;
	height: 10px;
	margin-right: -2px;
}
.progress {
	width: 91px;
	height: 20px;
	border: 1px solid #9298c4;
	border-radius: 3px;
	background: linear-gradient(#f1f2f7, #fff);
}

/* taskbar */
.taskbar {
	flex: none;
	height: 40px;
	display: flex;
	align-items: stretch;
	gap: 4px;
	padding-left: 8px;
	border-top: 1px solid #2b2827;
	box-shadow: inset 0 1px #97918a;
	color: #fff;
	background: linear-gradient(90deg, #4b4640 0, #6c645c 12%, #857d74 29%, #817970 31%, #9b9895 32%, #a3a19e 40%, #9b9996 50%, #9a9795 54%, #433b3a 55%, #332a2c 58%, #8e8986 59%, #979390 60%, #817970 61%, #857d76 73%, #6f6860 78%, #56514b 82%, #615c57 92%, #2d2a28 95%, #1f1c1b 100%);
}
.start {
	width: 38px;
	margin-right: 10px;
}
.start svg {
	width: 38px;
	height: 38px;
}
.app {
	width: 58px;
	margin-top: 1px;
	display: flex;
	align-items: center;
	justify-content: center;
	border: 1px solid #c4bfb9;
	border-radius: 3px;
	outline: 1px solid #2e2a28;
	outline-offset: 0;
	background: linear-gradient(135deg, #b5b0aa, #8d867f 50%, #736c65 52%, #8b847d);
}
.app svg {
	width: 32px;
	height: 32px;
}
.stacked {
	border-right: 4px double #c4bfb9;
}
.appActive {
	background: linear-gradient(135deg, #f0efed, #cdc9c5 50%, #b9b4ae 52%, #dedbd8);
}
.app .appLogo {
	background: #fff;
	border: solid;
	border-width: 1px 2px;
	border-color: #1c9ad6 #e03a2e #e03a2e #1c9ad6;
}
.tray {
	margin-left: auto;
	display: flex;
	align-items: center;
	gap: 8px;
	font: 12px/17px Roboto, sans-serif;
}
.tray svg {
	width: 16px;
	height: 16px;
}
.lang {
	margin-right: 8px;
	align-self: flex-start;
	line-height: 34px;
}
.trayEn {
	width: 16px;
	height: 16px;
	line-height: 16px;
	text-align: center;
	background: #85868e;
}
.clock {
	width: 62px;
	margin-left: 6px;
	display: flex;
	flex-direction: column;
	text-align: center;
}
.showDesktop {
	width: 14px;
	align-self: stretch;
	border: 1px solid #8f8b88;
	background: linear-gradient(135deg, #77736f, #2f2c2a 50%, #1e1b1a);
}
```

FILE: script.js
```js
// T1 T2 ΔT M1 M2 ΔM Q1 Q2 ΔQ
var hours = [
	'67,95 43,83 24,12 3,10 3,12 -0,01 0,21 0,14 0,07',
	'67,77 43,61 24,16 3,10 3,11 -0,01 0,21 0,14 0,07',
	'67,82 43,43 24,39 3,09 3,10 -0,01 0,21 0,13 0,07',
	'68,05 43,29 24,76 3,09 3,10 -0,01 0,21 0,13 0,08',
	'67,25 43,19 24,06 3,09 3,10 -0,01 0,21 0,13 0,07',
	'66,77 42,88 23,89 3,09 3,11 -0,01 0,21 0,13 0,07',
	'66,83 42,61 24,22 3,10 3,12 -0,01 0,21 0,13 0,07',
	'67,06 42,57 24,49 3,13 3,14 -0,01 0,21 0,13 0,08',
	'66,91 42,66 24,25 3,13 3,14 -0,01 0,21 0,13 0,08',
	'66,66 42,09 24,57 3,11 3,12 -0,01 0,21 0,13 0,08',
	'66,56 41,24 25,32 2,62 2,63 -0,01 0,17 0,11 0,07',
	'66,24 38,15 28,09 2,43 2,29 0,14 0,16 0,09 0,07',
	'66,03 38,46 27,57 2,43 2,44 -0,01 0,16 0,09 0,07',
	'65,94 38,93 27,01 2,45 2,46 -0,01 0,16 0,10 0,07',
	'66,94 39,40 27,54 2,46 2,48 -0,01 0,16 0,10 0,07',
	'67,36 39,94 27,42 2,47 2,48 -0,01 0,17 0,10 0,07',
	'67,61 40,30 27,31 2,44 2,45 -0,01 0,17 0,10 0,07',
	'67,89 40,38 27,51 2,40 2,41 -0,01 0,16 0,10 0,07',
	'67,98 40,36 27,62 2,36 2,37 -0,01 0,16 0,10 0,06',
	'67,87 40,18 27,69 2,31 2,32 -0,01 0,16 0,09 0,06',
	'68,03 39,63 28,40 2,25 2,26 -0,01 0,15 0,09 0,06',
	'67,94 39,10 28,84 2,19 2,20 -0,01 0,15 0,09 0,06',
	'67,86 38,71 29,15 2,18 2,19 -0,01 0,15 0,08 0,06',
	'68,00 38,60 29,40 2,31 2,32 -0,01 0,16 0,09 0,07'
];
var days = [
	'21.09.2011 67,97 40,63 27,34 58,63 58,84 -0,21 3,96 2,34 1,63 24:00',
	'22.09.2011 67,63 39,72 27,91 60,65 60,89 -0,24 4,13 2,43 1,69 24:00',
	'23.09.2011 67,40 39,44 27,96 63,96 64,19 -0,24 4,33 2,58 1,75 24:00',
	'24.09.2011 67,89 40,30 27,59 59,83 60,04 -0,22 4,05 2,39 1,66 24:00',
	'25.09.2011 68,00 39,02 28,98 59,40 59,61 -0,21 4,01 2,36 1,65 24:00',
	'26.09.2011 66,78 41,56 25,22 67,96 68,19 -0,23 4,58 2,74 1,84 24:00',
	'27.09.2011 67,43 41,89 25,54 73,91 74,18 -0,27 4,98 3,07 1,91 24:00',
	'28.09.2011 67,83 42,10 25,73 74,00 74,17 -0,17 4,98 3,09 1,90 24:00',
	'29.09.2011 67,63 42,19 25,44 74,01 74,36 -0,34 4,97 3,09 1,88 24:00',
	'30.09.2011 66,75 39,62 27,13 70,24 70,55 -0,30 4,77 2,93 1,84 24:00',
	'01.10.2011 66,72 39,25 27,47 60,06 60,30 -0,23 4,02 2,37 1,65 24:00',
	'02.10.2011 67,27 39,82 27,45 60,04 60,27 -0,23 4,02 2,37 1,65 24:00',
	'03.10.2011 66,83 39,38 27,45 60,09 60,33 -0,23 4,07 2,37 1,70 24:00',
	'04.10.2011 67,36 39,46 27,90 59,82 60,05 -0,22 4,01 2,35 1,66 24:00',
	'05.10.2011 66,84 39,73 27,11 59,67 59,89 -0,22 4,03 2,37 1,66 24:00',
	'06.10.2011 66,77 39,15 27,62 59,31 59,52 -0,21 3,98 2,33 1,65 24:00',
	'07.10.2011 67,23 39,32 27,91 59,66 59,87 -0,21 4,02 2,34 1,68 23:58',
	'08.10.2011 67,24 39,50 27,74 59,84 60,07 -0,23 4,02 2,36 1,66 24:00'
];

function cells(values) {
	return values.map(function (v) { return '<td>' + v + '</td>'; }).join('');
}
function dayRow(line, open) {
	var values = line.split(' ');
	var icon = open ? 'minus' : 'plus';
	return '<tr class="day' + (open ? ' open' : '') + '"><td class="date" colspan="2"><span><svg><use href="#' + icon + '"/></svg>' +
		values[0] + '</span></td>' + cells(values.slice(1)) + '<td></td></tr>';
}

var html = dayRow('20.09.2011 68,00 38,60 29,40 64,35 64,45 -0,11 4,33 2,66 1,67 24:00', true);
hours.forEach(function (line, i) {
	html += '<tr class="hour"><td class="gutter"></td><td class="time">' + (i < 10 ? '0' : '') + i + ':00</td>' +
		cells(line.split(' ')) + '<td>01:00</td><td></td></tr>';
});
var total = ['Итого:', '67,29', '41,23', '26,07', '64,35', '64,45', '-0,11', '4,33', '2,66', '1,67', '24:00', ''];
html += '<tr class="total"><td class="gutter"></td>' +
	cells(total.map(function (v) { return '<span>' + v + '</span>'; })) + '</tr>';
days.forEach(function (line) {
	html += dayRow(line, false);
});
document.getElementById('rows').innerHTML = html;
```
